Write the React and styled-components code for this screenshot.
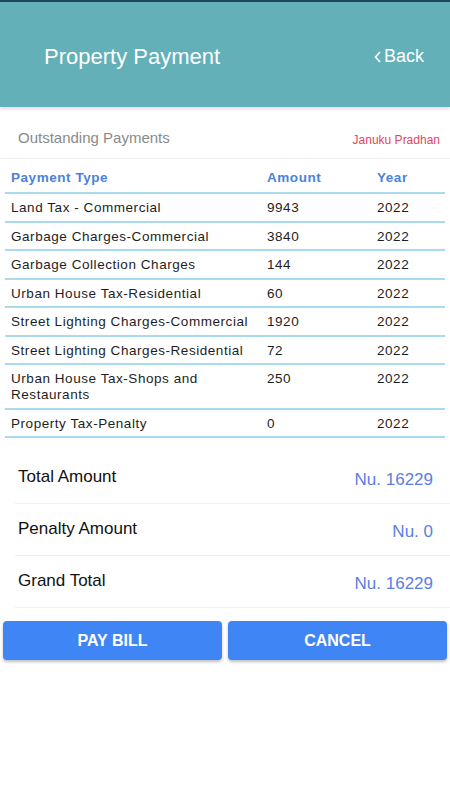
import styled, { createGlobalStyle } from "styled-components";

const GlobalStyle = createGlobalStyle`
  body {
    margin: 0;
    background: #ffffff;
    font-family: "Liberation Sans", Arial, sans-serif;
  }
`;

const Page = styled.div`
  width: 450px;
  min-height: 800px;
  background: #fff;
`;

const Header = styled.header`
  height: 105px;
  border-top: 2px solid #1d4858;
  background: #63b0b9;
  display: flex;
  align-items: center;
  justify-content: space-between;
  padding: 4px 26px 0 44px;
  box-sizing: border-box;
  height: 107px;
  box-shadow: 0 2px 3px rgba(200, 150, 170, 0.35);
  color: #fff;
`;

const Title = styled.h1`
  margin: 0;
  font-size: 22px;
  font-weight: normal;
`;

const Back = styled.span`
  font-size: 18px;
  display: flex;
  align-items: center;
  gap: 2px;
`;

const SubBar = styled.div`
  display: flex;
  justify-content: space-between;
  align-items: center;
  height: 52px;
  box-sizing: border-box;
  padding: 10px 10px 0 18px;
  border-bottom: 1px solid #f1f1f1;
`;

const SubTitle = styled.span`
  color: #8a8a8a;
  font-size: 15px;
`;

const UserName = styled.span`
  color: #e2465e;
  font-size: 12px;
  padding-top: 4px;
`;

const Table = styled.div`
  margin: 0 5px;
`;

const Row = styled.div`
  display: grid;
  grid-template-columns: 256px 110px 1fr;
  align-items: start;
  padding: ${(p) => (p.$head ? "11px 6px 6px" : "6px 6px 4.5px")};
  border-bottom: 2px solid #a9daf0;
  font-size: 13.5px;
  line-height: 16px;
  color: ${(p) => (p.$head ? "#4a82dc" : "#1e1e1e")};
  font-weight: ${(p) => (p.$head ? "bold" : "normal")};
  letter-spacing: 0.55px;
`;

const Summary = styled.div`
  padding-left: 15px;
  margin-top: 14px;
`;

const SummaryRow = styled.div`
  display: flex;
  justify-content: space-between;
  align-items: center;
  height: 51px;
  padding: 0 17px 0 3px;
  border-bottom: 1px solid #f0f0f0;
`;

const Label = styled.span`
  font-size: 17px;
  color: #111;
  margin-top: -2px;
`;

const Value = styled.span`
  font-size: 17px;
  color: #5b7ee2;
  margin-top: 5px;
`;

const Buttons = styled.div`
  display: grid;
  grid-template-columns: 1fr 1fr;
  gap: 6px;
  padding: 13px 3px 0;
`;

const Button = styled.button`
  height: 39px;
  border: none;
  border-radius: 4px;
  background: #3f85f6;
  color: #fff;
  font-family: inherit;
  font-size: 16px;
  font-weight: bold;
  box-shadow: 0 2px 3px rgba(0, 0, 0, 0.25);
`;

const rows = [
  ["Land Tax - Commercial", "9943"],
  ["Garbage Charges-Commercial", "3840"],
  ["Garbage Collection Charges", "144"],
  ["Urban House Tax-Residential", "60"],
  ["Street Lighting Charges-Commercial", "1920"],
  ["Street Lighting Charges-Residential", "72"],
  ["Urban House Tax-Shops and Restaurants", "250"],
  ["Property Tax-Penalty", "0"],
];

function App() {
  return (
    <Page>
      <GlobalStyle />
      <Header>
        <Title>Property Payment</Title>
        <Back>
          <svg width="8" height="12" viewBox="0 0 8 12">
            <path d="M6 1 L1.5 6 L6 11" fill="none" stroke="#fff" strokeWidth="1.6" />
          </svg>
          Back
        </Back>
      </Header>
      <SubBar>
        <SubTitle>Outstanding Payments</SubTitle>
        <UserName>Januku Pradhan</UserName>
      </SubBar>
      <Table>
        <Row $head>
          <div>Payment Type</div>
          <div>Amount</div>
          <div>Year</div>
        </Row>
        {rows.map(([type, amount]) => (
          <Row key={type}>
            <div>{type}</div>
            <div>{amount}</div>
            <div>2022</div>
          </Row>
        ))}
      </Table>
      <Summary>
        <SummaryRow>
          <Label>Total Amount</Label>
          <Value>Nu. 16229</Value>
        </SummaryRow>
        <SummaryRow>
          <Label>Penalty Amount</Label>
          <Value>Nu. 0</Value>
        </SummaryRow>
        <SummaryRow>
          <Label>Grand Total</Label>
          <Value>Nu. 16229</Value>
        </SummaryRow>
      </Summary>
      <Buttons>
        <Button>PAY BILL</Button>
        <Button>CANCEL</Button>
      </Buttons>
    </Page>
  );
}

export default App;
